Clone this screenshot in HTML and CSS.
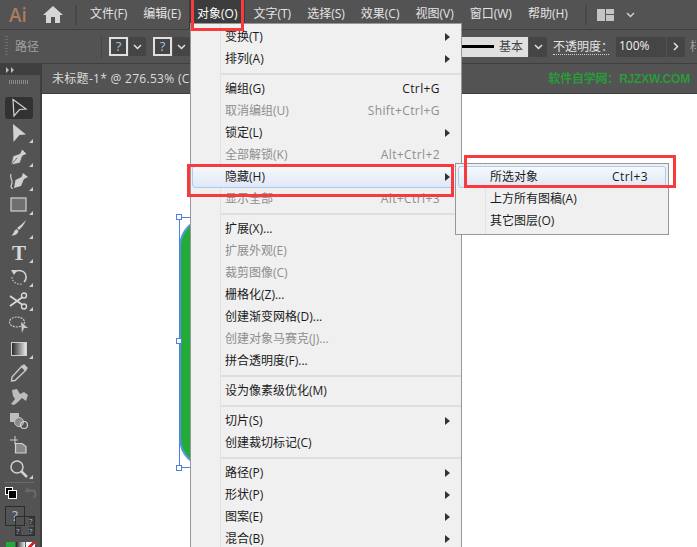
FILE: index.html
```html
<!DOCTYPE html>
<html lang="zh">
<head>
<meta charset="utf-8">
<title>Illustrator 对象菜单</title>
<link rel="stylesheet" href="styles.css">
</head>
<body>
<div class="app">
  <header class="menubar">
    <span class="logo">Ai</span>
    <svg class="home" width="20" height="17" viewBox="0 0 20 17"><path d="M10 0 L20 9 L17 9 L17 17 L12 17 L12 11 L8 11 L8 17 L3 17 L3 9 L0 9 Z" fill="#d6d6d6"/></svg>
    <span class="vsep"></span>
    <nav class="menus">
      <span>文件(F)</span><span>编辑(E)</span><span class="active">对象(O)</span><span>文字(T)</span><span>选择(S)</span><span>效果(C)</span><span>视图(V)</span><span>窗口(W)</span><span>帮助(H)</span>
    </nav>
    <span class="vsep end"></span>
    <svg class="layout" width="17" height="12" viewBox="0 0 17 12"><path d="M0 0H8V12H0ZM9 0H17V5H9ZM9 6H17V12H9Z" fill="#c4c4c4"/></svg>
    <svg class="chev" width="9" height="6" viewBox="0 0 9 6"><path d="M1 1L4.500 4.500L8 1" fill="none" stroke="#d0d0d0" stroke-width="1.500"/></svg>
  </header>

  <section class="controlbar">
    <span class="grip"></span>
    <span class="ctl-label">路径</span>
    <span class="ctl-sep"></span>
    <span class="qbox">?</span><span class="dd"><svg width="9" height="6" viewBox="0 0 9 6"><path d="M1 1L4.500 4.500L8 1" fill="none" stroke="#e0e0e0" stroke-width="1.500"/></svg></span>
    <span class="qbox second">?</span><span class="dd"><svg width="9" height="6" viewBox="0 0 9 6"><path d="M1 1L4.500 4.500L8 1" fill="none" stroke="#e0e0e0" stroke-width="1.500"/></svg></span>
    <span class="stroke"><span class="stroke-line"></span><span class="stroke-name">基本</span></span>
    <span class="dd wide"><svg width="9" height="6" viewBox="0 0 9 6"><path d="M1 1L4.500 4.500L8 1" fill="none" stroke="#e0e0e0" stroke-width="1.500"/></svg></span>
    <span class="opacity">不透明度：</span>
    <span class="opinput">100%</span>
    <span class="oparrow"><svg width="6" height="9" viewBox="0 0 6 9"><path d="M1 1L4.500 4.500L1 8" fill="none" stroke="#e0e0e0" stroke-width="1.500"/></svg></span>
    <span class="ctl-label clip">样</span>
  </section>

  <div class="workspace">
    <aside class="tools">
      <div class="tools-head"><svg width="9" height="6" viewBox="0 0 9 6"><path d="M0 0L3 3L0 6ZM5 0L8 3L5 6Z" fill="#bdbdbd"/></svg></div>
      <div class="tools-grip"></div>
      <div class="tool selected"><svg width="20" height="20" viewBox="0 0 20 20"><path d="M4 1.500L17 11L10.500 11.500L5 18Z" fill="none" stroke="#d2d2d2" stroke-width="1.200"/></svg></div>
      <div class="tool more"><svg width="20" height="20" viewBox="0 0 20 20"><path d="M4 1L17 11.500L10.500 12L4.500 19Z" fill="#d2d2d2"/></svg></div>
      <div class="tool more"><svg width="20" height="20" viewBox="0 0 20 20"><path d="M13 2L18 7L13.500 9L11 16L2 18L4 9L11 6.500Z M2 18L8 11" fill="#cfcfcf" stroke="#535353" stroke-width="0.800"/></svg></div>
      <div class="tool more"><svg width="22" height="20" viewBox="0 0 22 20"><path d="M15 2L20 6L16 8L13 15L6 17L7.500 9L13.500 6Z" fill="#cfcfcf"/><path d="M3 3C1 7 5 9 4 12C3 15 2 17 5 17.500" fill="none" stroke="#cfcfcf" stroke-width="1.200"/></svg></div>
      <div class="tool more"><svg width="18" height="16" viewBox="0 0 18 16"><rect x="1" y="1" width="15" height="13" fill="#6f6f6f" stroke="#c8c8c8" stroke-width="1.300"/></svg></div>
      <div class="tool more"><svg width="20" height="20" viewBox="0 0 20 20"><path d="M17 1C15 6 12 9 10 11L8 9C11 7 14 4 17 1Z M7.500 10L9.500 12C9 15 6 17 2 16.500C5 15.500 4.500 11.500 7.500 10Z" fill="#d2d2d2"/></svg></div>
      <div class="tool more"><span class="t-glyph">T</span></div>
      <div class="tool more"><svg width="20" height="20" viewBox="0 0 20 20"><path d="M5 6C8 2 16 3 17 9C17.500 12 16 14 15 15" fill="none" stroke="#d2d2d2" stroke-width="1.500"/><path d="M2 3L8 3L5 8Z" fill="#d2d2d2"/><path d="M3 10C3 15 8 18 13 17" fill="none" stroke="#bdbdbd" stroke-width="1.300" stroke-dasharray="1.500 1.500"/></svg></div>
      <div class="tool more"><svg width="20" height="18" viewBox="0 0 20 18"><circle cx="15" cy="3.500" r="2.500" fill="none" stroke="#d8d8d8" stroke-width="1.400"/><circle cx="15" cy="14.500" r="2.500" fill="none" stroke="#d8d8d8" stroke-width="1.400"/><path d="M1 4L13 12.500M1 14L13 5.500" stroke="#d8d8d8" stroke-width="1.800"/></svg></div>
      <div class="tool"><svg width="22" height="20" viewBox="0 0 22 20"><ellipse cx="9" cy="7" rx="7.500" ry="5" fill="none" stroke="#c8c8c8" stroke-width="1.200" stroke-dasharray="2 1"/><path d="M13 7L20 13L16 13L14 18Z" fill="#c8c8c8"/></svg></div>
      <div class="tool more"><span class="gradient-icon"></span></div>
      <div class="tool"><svg width="20" height="20" viewBox="0 0 20 20"><path d="M13 3L17 7L6 17.500L2.500 18L3 14Z" fill="none" stroke="#c8c8c8" stroke-width="1.400"/><path d="M12 4L15 1L19 5L16 8Z" fill="#c8c8c8"/></svg></div>
      <div class="tool"><svg width="20" height="20" viewBox="0 0 20 20"><path d="M3 3L8 2L11 7L15 5L19 8L17 14L13 11L9 15L5 18L2 17L6 12L4 9Z" fill="#bcbcbc"/></svg></div>
      <div class="tool"><svg width="20" height="18" viewBox="0 0 20 18"><rect x="1" y="1" width="9" height="9" fill="#bdbdbd"/><circle cx="10" cy="10" r="4.500" fill="#8a8a8a" stroke="#c8c8c8"/><circle cx="15" cy="13" r="3.500" fill="none" stroke="#d2d2d2" stroke-width="1.200"/></svg></div>
      <div class="tool"><svg width="20" height="20" viewBox="0 0 20 20"><path d="M6 1V9M1 5H9" stroke="#c8c8c8" stroke-width="1.100"/><path d="M6.500 8.500H13L17 11.500V18H6.500Z" fill="#888" stroke="#d2d2d2" stroke-width="1.200"/></svg></div>
      <div class="tool more"><svg width="20" height="20" viewBox="0 0 20 20"><circle cx="8" cy="8" r="6" fill="none" stroke="#d2d2d2" stroke-width="1.500"/><path d="M12.500 12.500L18 18" stroke="#d2d2d2" stroke-width="2.500"/></svg></div>
      <div class="tools-sep"></div>
      <div class="fillstroke">
        <svg width="12" height="12" viewBox="0 0 12 12"><rect x="0.500" y="0.500" width="7" height="7" fill="#000" stroke="#fff"/><rect x="3.500" y="3.500" width="8" height="8" fill="#000" stroke="#fff"/><rect x="5.500" y="5.500" width="4" height="4" fill="#000" stroke="#000"/></svg>
        <svg width="12" height="12" viewBox="0 0 12 12"><path d="M3 1L1 4L4 5M1.500 3.500H8C10 3.500 10.500 6 10.500 8L9 11" fill="none" stroke="#6b6b6b" stroke-width="1.800"/></svg>
      </div>
      <div class="swatches">
        <span class="swatch-main">?</span>
        <span class="swatch-back"><i>?</i><i>?</i><i>?</i></span>
      </div>
      <div class="modes"><span class="m-green"></span><span class="m-grad"></span><span class="m-none"></span></div>
    </aside>

    <main class="doc">
      <div class="tabbar">
        <span class="tabtitle">未标题-1* @ 276.53% (C</span>
        <span class="watermark">软件自学网：RJZXW.COM</span>
      </div>
      <div class="canvas">
        <div class="shape"></div>
        <div class="selbox"></div>
        <i class="handle h1"></i><i class="handle h2"></i><i class="handle h3"></i>
      </div>
    </main>
  </div>

  <div class="menu">
    <div class="item sub">变换(T)</div>
    <div class="item sub">排列(A)</div>
    <hr>
    <div class="item">编组(G)<kbd>Ctrl+G</kbd></div>
    <div class="item off">取消编组(U)<kbd>Shift+Ctrl+G</kbd></div>
    <div class="item sub">锁定(L)</div>
    <div class="item off">全部解锁(K)<kbd>Alt+Ctrl+2</kbd></div>
    <div class="item sub hot">隐藏(H)</div>
    <div class="item off">显示全部<kbd>Alt+Ctrl+3</kbd></div>
    <hr>
    <div class="item">扩展(X)...</div>
    <div class="item off">扩展外观(E)</div>
    <div class="item off">裁剪图像(C)</div>
    <div class="item">栅格化(Z)...</div>
    <div class="item">创建渐变网格(D)...</div>
    <div class="item off">创建对象马赛克(J)...</div>
    <div class="item">拼合透明度(F)...</div>
    <hr>
    <div class="item">设为像素级优化(M)</div>
    <hr>
    <div class="item sub">切片(S)</div>
    <div class="item">创建裁切标记(C)</div>
    <hr>
    <div class="item sub">路径(P)</div>
    <div class="item sub">形状(P)</div>
    <div class="item sub">图案(E)</div>
    <div class="item sub">混合(B)</div>
  </div>

  <div class="submenu">
    <div class="item hot">所选对象<kbd>Ctrl+3</kbd></div>
    <div class="item">上方所有图稿(A)</div>
    <div class="item">其它图层(O)</div>
  </div>

  <span class="redbox r-top"></span>
  <span class="redbox r-hide"></span>
  <span class="redbox r-sub"></span>
</div>
</body>
</html>
```
FILE: styles.css
```css
* { box-sizing: border-box; }
html, body { margin: 0; padding: 0; background: #fff; }
.app {
  position: relative;
  width: 697px;
  height: 547px;
  overflow: hidden;
  display: flex;
  flex-direction: column;
  font: 12px/16px "Open Sans", "Noto Sans CJK SC", sans-serif;
  color: #e4e4e4;
}

/* Top menu bar */
.menubar {
  flex: 0 0 30px;
  display: flex;
  align-items: center;
  background: #535353;
  border-bottom: 1px solid #3f3f3f;
}
.logo { margin-left: 9px; width: 34px; font: 600 19px/24px "Open Sans", sans-serif; color: #ab7d5c; }
.home { margin-right: 12px; }
.vsep { width: 2px; height: 20px; background: #484848; margin-right: 15px; }
.vsep.end { margin: 0 10px 0 9px; }
.menus { display: flex; margin-left: -10px; }
.menus span { padding: 0 8px; height: 29px; line-height: 28px; white-space: nowrap; }
.menus .active { background: #3c3c3c; color: #fff; }
.chev { margin-left: 12px; }

/* Control bar */
.controlbar {
  flex: 0 0 34px;
  display: flex;
  align-items: center;
  background: #535353;
  border-bottom: 1px solid #3f3f3f;
  padding-left: 5px;
  white-space: nowrap;
}
.grip { width: 3px; height: 21px; margin-right: 7px; background: repeating-linear-gradient(#6e6e6e 0 1px, transparent 1px 3px); }
.ctl-label { color: #a0a0a0; width: 24px; }
.ctl-label.clip { margin-left: 5px; overflow: hidden; width: 6px; }
.ctl-sep { width: 1px; height: 22px; background: #464646; margin: 0 7px 0 62px; }
.qbox {
  width: 19px; height: 19px;
  border: 2px solid #e0e0e0;
  background: #454545;
  color: #a9c3dc;
  font-size: 13px; line-height: 14px; text-align: center;
}
.qbox.second { margin-left: 7px; }
.dd {
  width: 17px; height: 19px; margin-left: 1px;
  background: #454545; border-radius: 0 2px 2px 0;
  display: flex; align-items: center; justify-content: center;
}
.stroke {
  margin-left: 271px;
  height: 20px;
  background: #e0e0e0;
  display: flex; align-items: center;
  flex: 0 0 67px;
}
.stroke-line { width: 33px; height: 3px; background: #000; }
.stroke-name { margin-left: 5px; color: #444; }
.dd.wide { width: 18px; height: 20px; }
.opacity { margin-left: 6px; width: 56px; color: #e4e4e4; border-bottom: 1px dotted #d0d0d0; line-height: 15px; }
.opinput { margin-left: 7px; width: 50px; height: 20px; background: #454545; padding-left: 3px; line-height: 18px; color: #f0f0f0; border-radius: 2px 0 0 2px; }
.oparrow { margin-left: 1px; width: 18px; height: 20px; background: #454545; display: flex; align-items: center; justify-content: center; }

/* Workspace */
.workspace { flex: 1; display: flex; min-height: 0; }
.tools {
  flex: 0 0 42px;
  background: #535353;
  border-right: 2px solid #3e3e3e;
  display: flex; flex-direction: column; align-items: center;
  padding-right: 2px;
}
.tools > * { flex-shrink: 0; }
.tools-head { align-self: stretch; height: 11px; background: #3f3f3f; padding: 3px 0 0 6px; margin-right: -2px; }
.tools-head svg { display: block; }
.tools-grip { width: 20px; height: 4px; margin: 5px 0 13px; background: repeating-linear-gradient(90deg, #8a8a8a 0 1px, transparent 1px 2px); }
.tool { position: relative; flex: 0 0 24px; width: 28px; display: flex; align-items: center; justify-content: center; }
.tool.selected { background: #323232; border-radius: 3px; flex-basis: 22px; margin: 0 0 2px; }
.tool.more::after {
  content: ""; position: absolute; right: 0; bottom: 2px;
  border-left: 4px solid transparent; border-bottom: 4px solid #d0d0d0;
}
.t-glyph { font: bold 21px/22px "Liberation Serif", serif; color: #d8d8d8; }
.gradient-icon { width: 16px; height: 14px; border: 1px solid #d0d0d0; background: linear-gradient(90deg, #2a2a2a, #e8e8e8); }
.tools-sep { flex: 0 0 1px; width: 30px; background: #6a6a6a; margin: 1px 0 4px; }
.fillstroke { display: flex; gap: 8px; align-self: flex-start; margin-left: 5px; }
.fillstroke svg { display: block; }
.swatches { position: relative; flex: 0 0 30px; align-self: flex-start; margin: 7px 0 0 5px; width: 30px; }
.swatch-main {
  position: absolute; left: 0; top: 0; width: 20px; height: 20px;
  border: 1px solid #2c2c2c; background: #535353;
  color: #a9c3dc; font-size: 14px; line-height: 18px; text-align: center;
}
.swatch-back {
  position: absolute; left: 10px; top: 10px; width: 20px; height: 20px;
  border: 1px solid #2c2c2c;
}
.swatch-back i {
  position: absolute; font: normal 8px/8px "Open Sans", sans-serif; color: #a9c3dc; background: #3a3a3a; width: 5px;
}
.swatch-back i:nth-child(1) { right: 0; top: 0; }
.swatch-back i:nth-child(2) { left: 0; bottom: 0; }
.swatch-back i:nth-child(3) { right: 0; bottom: 0; }
.modes { display: flex; gap: 1px; align-self: flex-start; margin: 6px 0 0 6px; }
.modes span { width: 9px; height: 8px; }
.m-green { background: #22ab38; }
.m-grad { background: linear-gradient(90deg, #222, #eee); }
.m-none { background: linear-gradient(135deg, #fff 40%, #e0202a 40% 60%, #fff 60%); }

/* Document */
.doc { flex: 1; display: flex; flex-direction: column; min-width: 0; }
.tabbar {
  flex: 0 0 30px;
  display: flex; align-items: center; justify-content: space-between;
  background: #535353;
  padding: 0 7px 0 10px;
  border-bottom: 1px solid #3f3f3f;
}
.tabtitle { color: #dcdcdc; white-space: nowrap; letter-spacing: 0.3px; }
.watermark { color: #2a9a3c; letter-spacing: -0.2px; font: bold 12px/16px "Liberation Sans", "Noto Sans CJK SC", sans-serif; }
.canvas { position: relative; flex: 1; background: #fff; }
.shape {
  position: absolute; left: 137px; top: 123px; width: 120px; height: 251px;
  border-radius: 30px; background: #22ab38; border: 2px solid #5b93e4;
}
.selbox { position: absolute; left: 137px; top: 123px; width: 120px; height: 251px; border: 1px solid #4f7fe0; }
.handle { position: absolute; width: 6px; height: 6px; background: #fff; border: 1px solid #4f7fe0; }
.h1 { left: 134px; top: 120px; }
.h2 { left: 134px; top: 244px; }
.h3 { left: 134px; top: 371px; }

/* Menus */
.menu, .submenu {
  position: absolute;
  background: #f0f0f0;
  border: 1px solid #979797;
  color: #1a1a1a;
  background-image: linear-gradient(#e2e2e2, #e2e2e2);
  background-repeat: no-repeat;
  background-size: 1px 100%;
  background-position: 29px 0;
}
.menu { left: 190px; top: 23px; width: 272px; padding-top: 2px; }
.submenu { left: 455px; top: 163px; width: 214px; padding: 2px 0; }
.item {
  position: relative;
  height: 22px;
  line-height: 22px;
  padding: 0 20px 0 33px;
  margin: 0 1px;
  display: flex; justify-content: space-between;
  white-space: nowrap;
}
.submenu .item { padding: 0 18px 0 32px; margin: 0 2px; }
kbd { font: inherit; letter-spacing: 0.4px; }
.off { color: #8e8e8e; }
.sub::after {
  content: ""; position: absolute; right: 10px; top: 7px;
  border-left: 5px solid #333;
  border-top: 4px solid transparent; border-bottom: 4px solid transparent;
}
.hot {
  border: 1px solid #aeccf0;
  border-radius: 3px;
  background: linear-gradient(#f6f9fd, #dfe8f6);
  padding-left: 32px;
  line-height: 20px;
}
.submenu .hot { padding-left: 31px; padding-right: 17px; }
.hot.sub::after { top: 6px; right: 9px; }
hr { border: 0; height: 2px; margin: 3px 0 3px 30px; background: #dedede; }

/* Annotations */
.redbox { position: absolute; border: 3px solid #f63a3e; }
.r-top { left: 191px; top: -3px; width: 53px; height: 34px; }
.r-hide { left: 187px; top: 164px; width: 267px; height: 33px; }
.r-sub { left: 464px; top: 155px; width: 212px; height: 33px; }
```
